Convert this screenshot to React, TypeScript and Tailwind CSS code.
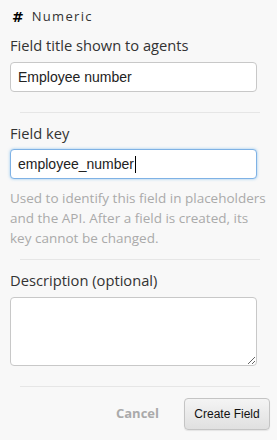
import React from "react";

export default function App() {
  const label = "block text-[14.7px] leading-[20px] text-[#333] [font-family:'Open_Sans',sans-serif]";
  const input =
    "block w-[247px] h-[30px] rounded-[4px] border border-[#c8c8c8] bg-white px-[7px] text-[14px] text-[#222] [font-family:'Liberation_Sans',Arial,sans-serif] outline-none";
  return (
    <div className="w-[277px] h-[440px] bg-[#f8f8f8] [font-family:'Open_Sans',sans-serif] overflow-hidden">
      <div className="pl-[10px] pt-[8px]">
        <div className="flex items-center h-[18px] text-[13px] text-[#333]">
          <span className="font-bold text-[14px] text-black [font-family:'DejaVu_Sans',sans-serif] ml-[2px]">#</span>
          <span className="ml-[8px] tracking-[1.3px]">Numeric</span>
        </div>
        <div className="mt-[9px]">
          <label className={label}>Field title shown to agents</label>
          <input className={input + " mt-[7px]"} defaultValue="Employee number" />
        </div>
      </div>
      <div className="mx-[20px] mt-[20px] h-px bg-[#e6e6e6] w-[240px]" />
      <div className="pl-[10px] pt-[10px]">
        <label className={label}>Field key</label>
        <div
          className={
            "mt-[6px] flex items-center w-[247px] h-[30px] rounded-[4px] border border-[#7fb2e5] bg-white px-[7px] text-[14px] text-[#222] [font-family:'Liberation_Sans',Arial,sans-serif] shadow-[0_0_3px_rgba(82,168,236,0.6)]"
          }
        >
          employee_number<span className="inline-block w-px h-[17px] bg-black ml-[1px]" />
        </div>
        <p className="mt-[9px] text-[13.5px] leading-[20px] text-[#aaa] pr-[4px]">
          Used to identify this field in placeholders and the API. After a field is created, its key cannot be changed.
        </p>
      </div>
      <div className="mx-[20px] mt-[11px] h-px bg-[#e6e6e6] w-[240px]" />
      <div className="pl-[10px] pt-[10px]">
        <label className={label}>Description (optional)</label>
        <textarea className="mt-[7px] block w-[247px] h-[69px] rounded-[4px] border border-[#c8c8c8] bg-white outline-none" />
      </div>
      <div className="mx-[20px] mt-[20px] h-px bg-[#e6e6e6] w-[240px]" />
      <div className="flex items-center justify-end pr-[7px] mt-[11px]">
        <span className="text-[13px] font-bold text-[#aaa] mr-[25px]">Cancel</span>
        <button className="h-[32px] w-[86px] rounded-[4px] border border-[#c4c4c4] bg-gradient-to-b from-[#f4f4f4] to-[#e0e0e0] text-[12px] text-[#111] [font-family:'Liberation_Sans',Arial,sans-serif] shadow-[0_1px_1px_rgba(0,0,0,0.08)]">
          Create Field
        </button>
      </div>
    </div>
  );
}
